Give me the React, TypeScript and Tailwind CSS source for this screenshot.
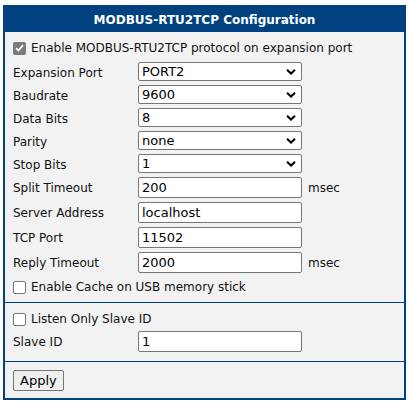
import React from "react";

const BLUE = "border-[#00417f]";

const Chevron = () => (
  <svg
    className="pointer-events-none absolute right-[6px] top-1/2 -translate-y-1/2"
    width="10"
    height="7"
    viewBox="0 0 10 7"
  >
    <path d="M1 1.2 L5 5 L9 1.2" fill="none" stroke="#000" strokeWidth="2" />
  </svg>
);

const SelectRow = ({ label, value }: { label: string; value: string }) => (
  <div className="flex h-[23px] items-start">
    <span className="w-[125px] pt-[3px]">{label}</span>
    <div className="relative mt-[1px] h-[19px] w-[164px]">
      <select
        defaultValue={value}
        className="h-full w-full appearance-none rounded-[2px] border border-[#767676] bg-white pl-[3px] text-[13px] leading-none text-black outline-none"
      >
        <option>{value}</option>
      </select>
      <Chevron />
    </div>
  </div>
);

const InputRow = ({
  label,
  value,
  unit,
}: {
  label: string;
  value: string;
  unit?: string;
}) => (
  <div className="flex h-[25px] items-start">
    <span className="w-[125px] pt-[3px]">{label}</span>
    <input
      defaultValue={value}
      className="mt-[1px] h-[21px] w-[164px] rounded-[2px] border border-[#767676] bg-white px-[3px] text-[13px] text-black outline-none"
    />
    {unit && <span className="pl-[6px] pt-[3px]">{unit}</span>}
  </div>
);

const Check = ({ label, checked }: { label: string; checked?: boolean }) => (
  <div className="flex h-[22px] items-center">
    {checked ? (
      <span className="flex h-[13px] w-[13px] items-center justify-center rounded-[2px] bg-[#7b7b7b]">
        <svg width="9" height="8" viewBox="0 0 9 8">
          <path d="M1 4.2 L3.4 6.5 L8 1.2" fill="none" stroke="#fff" strokeWidth="1.8" />
        </svg>
      </span>
    ) : (
      <span className="h-[13px] w-[13px] rounded-[2px] border border-[#767676] bg-white" />
    )}
    <span className="pl-[5px]">{label}</span>
  </div>
);

export default function App() {
  return (
    <div
      className="h-[406px] w-[408px] bg-white pl-[3px] pt-[5px] text-[12px] text-[#111]"
      style={{ fontFamily: '"DejaVu Sans", Verdana, sans-serif' }}
    >
      <div className={`w-[403px] border-2 ${BLUE} bg-[#f2f2f2]`}>
        <div className="flex h-[25px] items-center justify-center bg-[#00417f] text-[12px] font-bold text-white">
          MODBUS-RTU2TCP Configuration
        </div>
        <div className="px-[8px] pb-[4px] pt-[5px]">
          <div className="mb-[2px]">
            <Check label="Enable MODBUS-RTU2TCP protocol on expansion port" checked />
          </div>
          <SelectRow label="Expansion Port" value="PORT2" />
          <SelectRow label="Baudrate" value="9600" />
          <SelectRow label="Data Bits" value="8" />
          <SelectRow label="Parity" value="none" />
          <SelectRow label="Stop Bits" value="1" />
          <InputRow label="Split Timeout" value="200" unit="msec" />
          <InputRow label="Server Address" value="localhost" />
          <InputRow label="TCP Port" value="11502" />
          <InputRow label="Reply Timeout" value="2000" unit="msec" />
          <Check label="Enable Cache on USB memory stick" />
        </div>
        <div className={`border-t ${BLUE} px-[8px] pb-[6px] pt-[5px]`}>
          <Check label="Listen Only Slave ID" />
          <InputRow label="Slave ID" value="1" />
        </div>
        <div className={`border-t ${BLUE} px-[8px] pb-[7px] pt-[8px]`}>
          <button className="h-[21px] rounded-[2px] border border-[#767676] bg-[#efefef] px-[6px] text-[13px] leading-none text-black">
            Apply
          </button>
        </div>
      </div>
    </div>
  );
}
